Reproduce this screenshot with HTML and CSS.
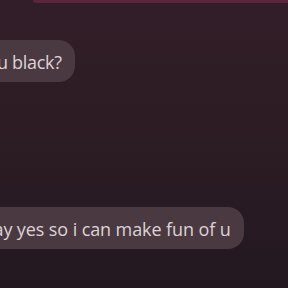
FILE: index.html
```html
<!DOCTYPE html>
<html>
<head>
<meta charset="utf-8">
<link rel="stylesheet" href="styles.css">
</head>
<body>
<div class="screen">
  <div class="topbar"></div>
  <div class="thread">
    <div class="bubble b1">are u black?</div>
    <div class="bubble b2">say yes so i can make fun of u</div>
  </div>
</div>
</body>
</html>
```
FILE: styles.css
```css
html, body {
  margin: 0;
  padding: 0;
  width: 288px;
  height: 288px;
  overflow: hidden;
  background: #2a1b23;
}
.screen {
  width: 288px;
  height: 288px;
  background: linear-gradient(180deg, #321e28 0%, #2c1c24 50%, #231820 100%);
  display: flex;
  flex-direction: column;
  overflow: hidden;
}
.topbar {
  height: 3px;
  margin-left: 33px;
  background: #5e2439;
  border-bottom-left-radius: 3px;
}
.thread {
  display: flex;
  flex-direction: column;
  align-items: flex-start;
  padding-top: 37px;
  gap: 125px;
}
.bubble {
  font-family: "Open Sans", sans-serif;
  font-size: 18px;
  line-height: 24px;
  color: #ddd3d7;
  background: #4a3940;
  border-radius: 16px;
  padding: 10px 13px 8px 0;
  white-space: nowrap;
}
.b1 {
  margin-left: -34px;
  letter-spacing: -0.3px;
}
.b2 {
  margin-left: -15px;
  letter-spacing: -0.1px;
}
```
